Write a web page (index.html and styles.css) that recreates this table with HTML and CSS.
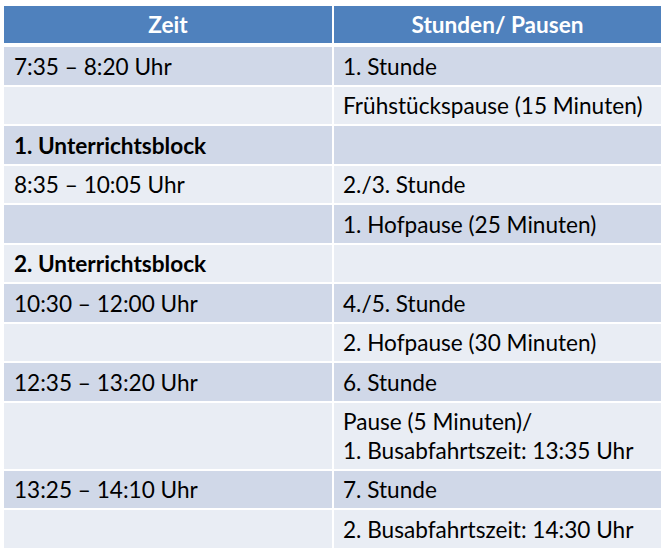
FILE: index.html
```html
<!DOCTYPE html>
<html lang="de">
<head>
<meta charset="utf-8">
<title>Zeitplan</title>
<link rel="stylesheet" href="styles.css">
</head>
<body>
<div class="page">
<table class="plan">
  <thead>
    <tr><th>Zeit</th><th>Stunden/ Pausen</th></tr>
  </thead>
  <tbody>
    <tr class="odd"><td>7:35 – 8:20 Uhr</td><td>1. Stunde</td></tr>
    <tr class="even"><td></td><td>Frühstückspause (15 Minuten)</td></tr>
    <tr class="odd"><td class="b">1. Unterrichtsblock</td><td></td></tr>
    <tr class="even"><td>8:35 – 10:05 Uhr</td><td>2./3. Stunde</td></tr>
    <tr class="odd"><td></td><td>1. Hofpause (25 Minuten)</td></tr>
    <tr class="even"><td class="b">2. Unterrichtsblock</td><td></td></tr>
    <tr class="odd"><td>10:30 – 12:00 Uhr</td><td>4./5. Stunde</td></tr>
    <tr class="even"><td></td><td>2. Hofpause (30 Minuten)</td></tr>
    <tr class="odd"><td>12:35 – 13:20 Uhr</td><td>6. Stunde</td></tr>
    <tr class="even"><td></td><td>Pause (5 Minuten)/<br>1. Busabfahrtszeit: 13:35 Uhr</td></tr>
    <tr class="odd"><td>13:25 – 14:10 Uhr</td><td>7. Stunde</td></tr>
    <tr class="even"><td></td><td>2. Busabfahrtszeit: 14:30 Uhr</td></tr>
  </tbody>
</table>
</div>
</body>
</html>
```
FILE: styles.css
```css
html, body {
  margin: 0;
  background: #ffffff;
}
.page {
  padding: 6px 0 0 4px;
}
.plan {
  width: 657px;
  border-collapse: collapse;
  table-layout: fixed;
  font-family: Lato, "Open Sans", sans-serif;
  font-size: 22.6px;
  color: #000000;
}
.plan th {
  background: #4f81bd;
  color: #ffffff;
  font-weight: bold;
  text-align: center;
  height: 36px;
  padding: 0;
  border-left: 2px solid #ffffff;
  border-bottom: 4.5px solid #ffffff;
  line-height: 37px;
}
.plan th:first-child,
.plan td:first-child {
  border-left: none;
  width: 328px;
}
.plan td {
  padding: 5.5px 10px 3.5px 9px;
  line-height: 28.5px;
  border-left: 2px solid #ffffff;
  border-bottom: 2px solid #ffffff;
  vertical-align: top;
}
.plan td:first-child {
  padding-left: 10px;
}
.plan tr.odd td { background: #d0d8e8; }
.plan tr.even td { background: #e9edf4; }
.plan td.b { font-weight: bold; }
```
